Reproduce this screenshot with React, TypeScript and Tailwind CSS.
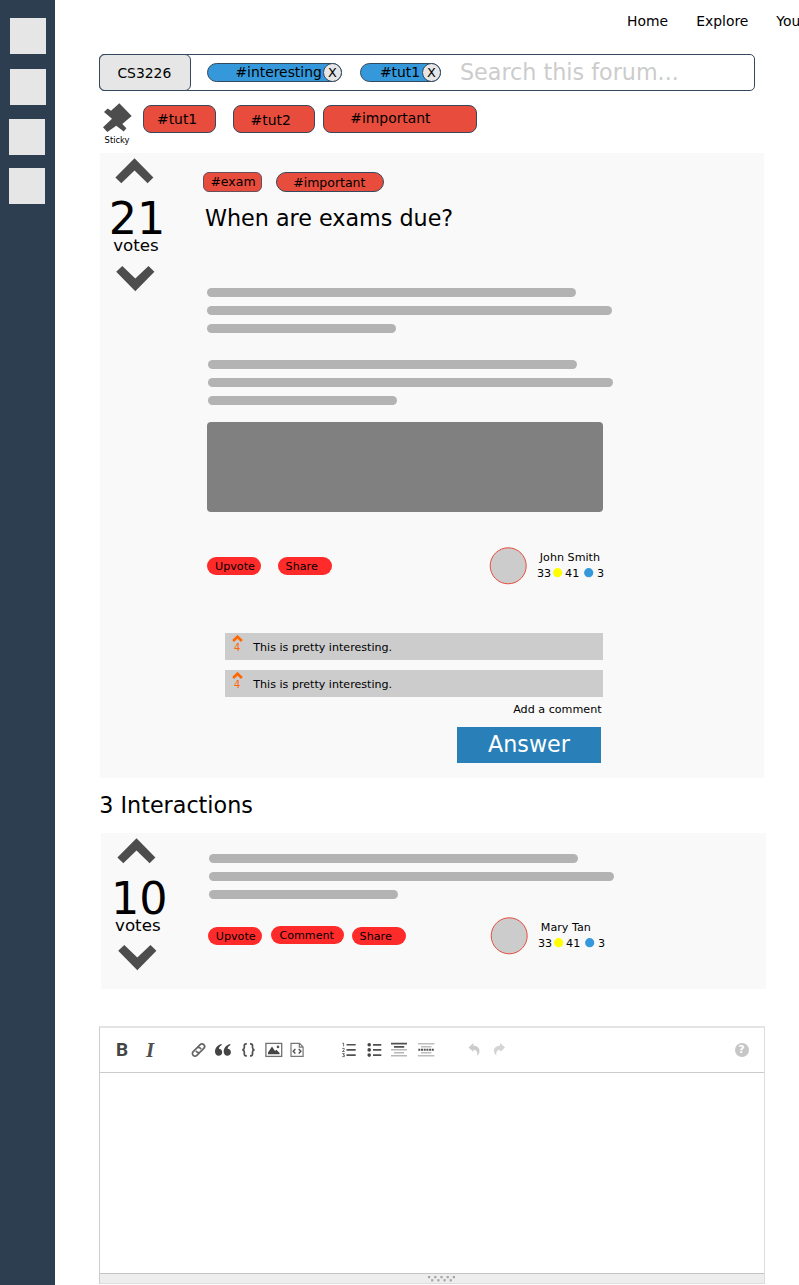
import React from "react";

const dark = "#4d4d4d";

function Chevron({ down = false, className = "" }: { down?: boolean; className?: string }) {
  return (
    <svg width="39" height="26" viewBox="0 0 39 26" className={`block shrink-0 ${className}`}>
      <path
        d={down ? "M6.3 0 L19.3 12.6 L32.5 0 L38.4 5.8 L19.3 25.3 L0.2 5.8 Z" : "M19.5 0.2 L38.4 19.4 L32.6 25.2 L19.5 12.6 L6.3 25.2 L0.4 19.4 Z"}
        fill={dark}
      />
    </svg>
  );
}

function Bars({ className = "" }: { className?: string }) {
  return (
    <div className={`flex flex-col gap-[9px] ${className}`}>
      <div className="h-[9px] w-[368.5px] rounded-full bg-[#b3b3b3]" />
      <div className="h-[9px] w-[404.5px] rounded-full bg-[#b3b3b3]" />
      <div className="h-[9px] w-[189px] rounded-full bg-[#b3b3b3]" />
    </div>
  );
}

function Filter({ label, className = "" }: { label: string; className?: string }) {
  return (
    <div className={`mt-[8px] flex h-[19px] shrink-0 justify-end rounded-full border border-[#34495e] bg-[#3498db] text-[13.9px] leading-[16px] ${className}`}>
      <span className="w-0 flex-1 whitespace-nowrap">{label}</span>
      <button className="-my-px -mr-px flex h-[19px] w-[19px] shrink-0 items-start justify-center rounded-full border border-[#34495e] bg-[#e6e6e6] text-[12.8px] leading-[17px]">
        X
      </button>
    </div>
  );
}

function Action({ label, className = "" }: { label: string; className?: string }) {
  return (
    <button className={`flex h-[18px] shrink-0 items-start rounded-full bg-[#ff2a2a] pt-[3px] text-left text-[11.15px] leading-[13px] ${className}`}>
      {label}
    </button>
  );
}

function User({ name }: { name: string }) {
  return (
    <div className="flex">
      <svg width="39" height="38" viewBox="0 0 39 38">
        <circle cx="19.2" cy="18.8" r="18" fill="#cccccc" stroke="#e74c3c" />
      </svg>
      <div className="ml-[9px] pt-[4px] text-[11.15px] leading-[13px]">
        <div className="pl-[2.8px]">{name}</div>
        <div className="mt-[3px] flex">
          <span className="w-[15.7px]">33</span>
          <svg width="10" height="13" viewBox="0 0 10 13"><circle cx="4.6" cy="5.7" r="4.6" fill="#ffff00" /></svg>
          <span className="ml-[2.4px] w-[18.8px]">41</span>
          <svg width="10" height="13" viewBox="0 0 10 13"><circle cx="4.7" cy="5.7" r="4.6" fill="#3498db" /></svg>
          <span className="ml-[3.2px]">3</span>
        </div>
      </div>
    </div>
  );
}

function Comment() {
  return (
    <div className="flex h-[27px] w-[378px] bg-[#cccccc] pl-[7px]">
      <div className="w-[21.3px] pt-[2px] text-[#ff6600]">
        <svg width="12" height="7" viewBox="0 0 12 7" className="block">
          <path d="M1.1 6 L5.5 1.7 L9.9 6" fill="none" stroke="#ff6600" strokeWidth="2.6" />
        </svg>
        <div className="pl-[2px] text-[9.8px] leading-[11px]">4</div>
      </div>
      <span className="pt-[8px] text-[11.1px] leading-[13px]">This is pretty interesting.</span>
    </div>
  );
}

function Icon({ w, className = "", children }: { w: number; className?: string; children: React.ReactNode }) {
  return (
    <svg width={w} height="16" viewBox={`0 0 ${w} 16`} fill="none" stroke="#505050" className={`block shrink-0 ${className}`}>
      {children}
    </svg>
  );
}

function Toolbar() {
  return (
    <div className="flex h-[45px] w-full items-start border-b border-[#cccccc] pt-[14px]">
      <b className="ml-[16px] w-[28px] font-[Roboto] text-[19px] leading-[16px] font-bold text-[#444444]">B</b>
      <i className="w-[47px] pl-[2px] font-['Liberation_Serif',serif] text-[21px] leading-[16px] font-bold text-[#505050] italic">I</i>
      <Icon w={16}>
        <g transform="rotate(-45 7.5 8)" strokeWidth="1.7" stroke="#666666">
          <path d="M6.3 10.6 H2.6 A2.6 2.6 0 0 1 2.6 5.4 H7.5 A2.6 2.6 0 0 1 9.8 9.2" />
          <path d="M8.7 5.4 H12.4 A2.6 2.6 0 0 1 12.4 10.6 H7.5 A2.6 2.6 0 0 1 5.2 6.8" />
        </g>
      </Icon>
      <Icon w={18} className="ml-[8px]">
        <g fill="#444444" stroke="none">
          <path d="M6.3 2 C2.3 3.1 0 6.2 0 9.8 C0 12.2 1.5 13.7 3.6 13.7 C5.7 13.7 7.2 12.2 7.2 10.2 C7.2 8.2 5.7 6.8 3.9 6.8 C4.2 5.1 5.1 3.8 6.9 3 Z" />
          <path d="M15 2 C11 3.1 8.7 6.2 8.7 9.8 C8.7 12.2 10.2 13.7 12.3 13.7 C14.4 13.7 15.9 12.2 15.9 10.2 C15.9 8.2 14.4 6.8 12.6 6.8 C12.9 5.1 13.8 3.8 15.6 3 Z" />
        </g>
      </Icon>
      <Icon w={16} className="ml-[8.5px]">
        <path strokeWidth="1.7" d="M4.8 1.8 H4 C2.8 1.8 2.3 2.4 2.3 3.5 V5.5 C2.3 6.8 1.8 7.5 0.4 7.8 C1.8 8.1 2.3 8.8 2.3 10.1 V12.1 C2.3 13.2 2.8 13.8 4 13.8 H4.8 M8 1.8 H8.8 C10 1.8 10.5 2.4 10.5 3.5 V5.5 C10.5 6.8 11 7.5 12.4 7.8 C11 8.1 10.5 8.8 10.5 10.1 V12.1 C10.5 13.2 10 13.8 8.8 13.8 H8" />
      </Icon>
      <Icon w={18} className="ml-[7px]">
        <rect x="0.9" y="1.4" width="15.8" height="13" strokeWidth="1.3" stroke="#707070" />
        <path d="M3 12.2 V10.4 L7 4.6 L10 9 L11.4 7.8 L14.6 11 V12.2 Z" fill="#444444" stroke="none" />
        <circle cx="13" cy="4.9" r="1.3" fill="#555555" stroke="none" />
      </Icon>
      <Icon w={16} className="ml-[7px]">
        <path d="M1 1.4 H9.6 L13.1 5 V14.4 H1 Z M9.3 1.4 V5.2 H13.1" strokeWidth="1.2" stroke="#777777" />
        <path d="M5.4 7 L3.2 9.2 L5.4 11.4 M8.7 7 L10.9 9.2 L8.7 11.4" strokeWidth="1.4" />
      </Icon>
      <Icon w={16} className="ml-[36.5px]">
        <path d="M4.5 2.8 H13.7 M4.5 7.9 H13.7 M4.5 13.1 H13.7" strokeWidth="1.6" />
        <path d="M0.4 1.6 L1.6 1 V4.4 M0.2 6.4 H2.2 V7.8 L0.4 9.5 H2.7 M0.2 11.6 H2.4 L1.2 13 H2.4 V14.6 H0.2" strokeWidth="0.8" />
      </Icon>
      <Icon w={16} className="ml-[9px]">
        <path d="M6 2.8 H14.3 M6 7.9 H14.3 M6 13.1 H14.3" strokeWidth="1.7" />
        <g fill="#444444" stroke="none">
          <circle cx="2.2" cy="2.8" r="1.8" /><circle cx="2.2" cy="7.9" r="1.8" /><circle cx="2.2" cy="13.1" r="1.8" />
        </g>
      </Icon>
      <Icon w={18} className="ml-[8px]">
        <path d="M0 1.7 H16 M3 4.8 H13.2" strokeWidth="1.7" />
        <path d="M0 7.8 H16 M3 10.7 H13.2 M0 13.7 H16" strokeWidth="1.4" stroke="#b8b8b8" />
      </Icon>
      <Icon w={18} className="ml-[8.5px]">
        <path d="M0 1.7 H16.4 M3 4.8 H13.4 M3 10.7 H13.4 M0 13.7 H16.4" strokeWidth="1.4" stroke="#bdbdbd" />
        <path d="M0.3 7.8 H16.4" strokeWidth="2" strokeDasharray="2 0.7" />
      </Icon>
      <Icon w={16} className="ml-[32.5px]">
        <path d="M0.5 5.5 L5.4 1 V3.7 C9.8 3.7 11.9 6.2 11.5 9.6 C11.3 11.3 10.4 12.6 9 13.8 C9.8 10.3 8.7 7.8 5.4 7.7 V10 Z" fill="#cccccc" stroke="none" />
      </Icon>
      <Icon w={16} className="ml-[8.5px]">
        <path d="M12 5.5 L7.1 1 V3.7 C2.7 3.7 0.6 6.2 1 9.6 C1.2 11.3 2.1 12.6 3.5 13.8 C2.7 10.3 3.8 7.8 7.1 7.7 V10 Z" fill="#d4d4d4" stroke="none" />
      </Icon>
      <div className="mt-[1px] mr-[15.5px] ml-auto flex h-[14px] w-[14px] items-center justify-center rounded-full bg-[#c6c6c6] text-[11px] leading-[14px] font-bold text-white">
        ?
      </div>
    </div>
  );
}

const tag = "shrink-0 border border-[#34495e] bg-[#e74c3c] whitespace-nowrap";

export default function App() {
  return (
    <div className="flex h-[1285px] w-[799px] overflow-hidden bg-white font-['DejaVu_Sans',sans-serif] text-black">
      <aside className="flex w-[55px] shrink-0 flex-col bg-[#2c3e50] pt-[18px] pl-[9px]">
        <div className="ml-[1px] h-[36px] w-[36px] bg-[#e6e6e6]" />
        <div className="mt-[15px] ml-[1px] h-[36px] w-[36px] bg-[#e6e6e6]" />
        <div className="mt-[14px] h-[36px] w-[36px] bg-[#e6e6e6]" />
        <div className="mt-[13px] h-[36px] w-[36px] bg-[#e6e6e6]" />
      </aside>

      <main className="flex w-[744px] shrink-0 flex-col pl-[44px]">
        <nav className="flex h-[54px] shrink-0 pt-[13px] pl-[528px] text-[13.9px] leading-[16px]">
          <span className="w-[69.3px] shrink-0">Home</span>
          <span className="w-[80px] shrink-0">Explore</span>
          <span className="shrink-0">You</span>
        </nav>

        <div className="flex h-[37px] w-[656px] shrink-0 rounded-[5px] border border-[#34495e]">
          <div className="-m-px h-[37px] w-[92px] shrink-0 rounded-[6px] border-[1.5px] border-[#34495e] bg-[#e6e6e6] pt-[10px] pl-[17.4px] text-[13.9px] leading-[16px]">
            CS3226
          </div>
          <Filter label="#interesting" className="ml-[17px] w-[135px] pl-[27.4px]" />
          <Filter label="#tut1" className="ml-[18px] w-[81px] pl-[18.9px]" />
          <span className="ml-[19px] pt-[4px] text-[22.25px] leading-[26px] text-[#cccccc]">Search this forum...</span>
        </div>

        <div className="flex h-[62px] shrink-0 items-start pt-[12px]">
          <div className="w-[44px] shrink-0 pl-[4px]">
            <svg width="30" height="32" viewBox="103 103 30 32" className="block">
              <path d="M119.3 103.3 L131.7 116 L122.3 124 L126.4 128.3 L123.7 131.6 L116.3 125.7 L107.3 132 L103 127.3 L112 118.8 L104 112 L107.7 108.6 L111 110.8 Z" fill={dark} />
            </svg>
            <div className="pl-[1.6px] text-[8.35px] leading-[10px]">Sticky</div>
          </div>
          <div className={`${tag} mt-[2px] h-[28px] w-[73px] rounded-[8px] pt-[5px] pl-[13px] text-[13.9px] leading-[16px]`}>#tut1</div>
          <div className={`${tag} mt-[2px] ml-[17px] h-[28px] w-[82px] rounded-[8px] pt-[6px] pl-[16.6px] text-[13.9px] leading-[16px]`}>#tut2</div>
          <div className={`${tag} mt-[2px] ml-[8px] h-[28px] w-[154px] rounded-[8px] pt-[4px] pl-[26.3px] text-[13.9px] leading-[16px]`}>#important</div>
        </div>

        <section className="ml-[1px] flex h-[625px] w-[664px] shrink-0 self-start bg-[#f9f9f9]">
          <div className="w-[108px] shrink-0 pt-[5px]">
            <Chevron className="ml-[15px]" />
            <div className="mt-[8px] pl-[8.8px] text-[44.5px] leading-[53px]">21</div>
            <div className="-mt-[10px] pl-[13.2px] text-[16.7px] leading-[20px]">votes</div>
            <Chevron down className="mt-[11px] ml-[16px]" />
          </div>
          <div className="w-[396px] shrink-0">
            <div className="-ml-[5px] flex h-[52px] items-start pt-[19px] text-[12.5px] leading-[15px]">
              <div className="h-[20px] w-[59px] shrink-0 rounded-[6px] border border-[#66505c] bg-[#e74c3c] pt-px pl-[6.4px]">#exam</div>
              <div className={`${tag} ml-[14px] h-[20px] w-[108px] rounded-full pt-[2px] pl-[16.2px]`}>#important</div>
            </div>
            <h1 className="-ml-[3px] text-[22.25px] leading-[26px] whitespace-nowrap">When are exams due?</h1>
            <Bars className="mt-[57px] -ml-[0.8px]" />
            <Bars className="mt-[27px]" />
            <div className="mt-[17px] -ml-px h-[90px] w-[396px] rounded-[4px] bg-[#808080]" />
            <div className="mt-[35px] -ml-px flex h-[86px] items-start">
              <Action label="Upvote" className="mt-[10px] w-[54px] pl-[8px]" />
              <Action label="Share" className="mt-[10px] ml-[17px] w-[54px] pl-[7.6px]" />
              <div className="ml-[157px]"><User name="John Smith" /></div>
            </div>
            <div className="ml-[17px] flex flex-col gap-[10px]">
              <Comment />
              <Comment />
            </div>
            <div className="mt-[6px] pl-[305.2px] text-[11.15px] leading-[13px] whitespace-nowrap">Add a comment</div>
            <button className="mt-[11px] ml-[249px] flex h-[36px] w-[144px] items-start bg-[#2980b9] pt-[4px] pl-[31px] text-left text-[22.25px] leading-[26px] text-white">
              Answer
            </button>
          </div>
        </section>

        <h2 className="mt-[14px] pl-[0.3px] text-[22.25px] leading-[26px]">3 Interactions</h2>

        <section className="mt-[15px] ml-[2px] flex h-[156px] w-[665px] shrink-0 bg-[#f9f9f9]">
          <div className="w-[107px] shrink-0 pt-[5px]">
            <Chevron className="ml-[16px]" />
            <div className="mt-[8px] pl-[10px] text-[44.5px] leading-[53px]">10</div>
            <div className="-mt-[10px] pl-[14px] text-[16.7px] leading-[20px]">votes</div>
            <Chevron down className="mt-[10px] ml-[17px]" />
          </div>
          <div className="w-[404px] pt-[21px]">
            <Bars className="ml-[1px]" />
            <div className="mt-[18px] flex items-start">
              <Action label="Upvote" className="mt-[10px] w-[54px] pl-[7.8px]" />
              <Action label="Comment" className="mt-[9px] ml-[9px] w-[73px] pl-[8.4px]" />
              <Action label="Share" className="mt-[10px] ml-[8px] w-[54px] pl-[7.6px]" />
              <div className="ml-[84px]"><User name="Mary Tan" /></div>
            </div>
          </div>
        </section>

        <section className="mt-[37px] flex h-[258px] w-[666px] shrink-0 flex-col border border-t-2 border-[#dddddd] border-t-[#e4e4e4] border-l-[#cccccc]">
          <Toolbar />
          <div className="flex-1" />
          <div className="flex h-[10px] justify-center border-t border-[#c4c4c4] bg-[#ededed] pl-[20px]">
            <svg width="30" height="9" viewBox="0 0 30 9" fill="#a4a4a4">
              {[0, 1, 2, 3, 4].map((i) => <rect key={i} x={1 + i * 6.2} y="2" width="2.2" height="2.2" />)}
              {[0, 1, 2, 3].map((i) => <rect key={i} x={4.1 + i * 6.2} y="5.2" width="2.2" height="2.2" />)}
            </svg>
          </div>
        </section>
      </main>
    </div>
  );
}
